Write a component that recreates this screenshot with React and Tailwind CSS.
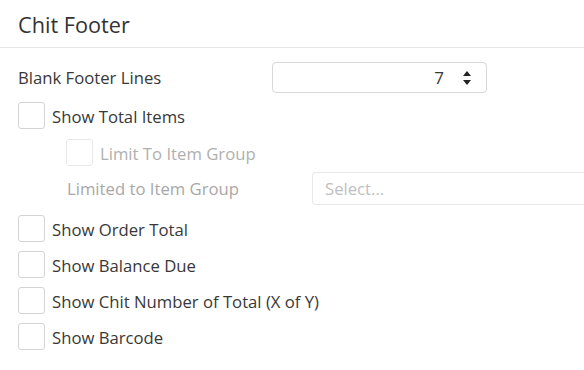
import React from "react";

function Box({ disabled }) {
  return (
    <div
      className={
        "w-[27px] h-[27px] rounded-[3px] border bg-white shrink-0 " +
        (disabled ? "border-[#e8e8e8]" : "border-[#d4d4d4]")
      }
    />
  );
}

function Check({ label, disabled, className = "" }) {
  return (
    <div className={"flex items-center h-[27px] " + className}>
      <Box disabled={disabled} />
      <span className={"ml-[7px] leading-[27px] pt-[2px] " + (disabled ? "text-[#b0b0b0]" : "text-[#383838]")}>{label}</span>
    </div>
  );
}

export default function App() {
  return (
    <div
      className="w-[584px] h-[370px] bg-white overflow-hidden text-[16.7px] text-[#383838]"
      style={{ fontFamily: '"Open Sans", "Noto Sans", sans-serif' }}
    >
      <div className="h-[48px] border-b border-[#e6e6e6] pl-[18px] pt-[10px]">
        <h1 className="text-[21.7px] leading-[30px] font-normal text-[#333]">Chit Footer</h1>
      </div>
      <div className="pl-[18px]">
        <div className="flex items-center mt-[14px] h-[31px]">
          <span className="w-[254px] pt-[1px]">Blank Footer Lines</span>
          <div className="w-[215px] h-[31px] border border-[#d8d8d8] rounded-[4px] flex items-center justify-end pr-[14px]">
            <span className="text-[17px] mr-[18px]">7</span>
            <svg width="10" height="20" viewBox="0 0 10 20">
              <polygon points="1,8 5,3 9,8" fill="#222" />
              <polygon points="1,12 9,12 5,17" fill="#222" />
            </svg>
          </div>
        </div>
        <Check label="Show Total Items" className="mt-[9px]" />
        <Check label="Limit To Item Group" disabled className="mt-[10px] ml-[48px]" />
        <div className="flex items-center mt-[6px] h-[33px] ml-[49px]">
          <span className="w-[245px] text-[#a8a8a8]">Limited to Item Group</span>
          <div className="flex-1 h-[33px] border border-[#e8e8e8] rounded-l-[4px] border-r-0 flex items-center pl-[12px] text-[#c0c0c0]">
            Select...
          </div>
        </div>
        <Check label="Show Order Total" className="mt-[10px]" />
        <Check label="Show Balance Due" className="mt-[9px]" />
        <Check label="Show Chit Number of Total (X of Y)" className="mt-[9px]" />
        <Check label="Show Barcode" className="mt-[9px]" />
      </div>
    </div>
  );
}
